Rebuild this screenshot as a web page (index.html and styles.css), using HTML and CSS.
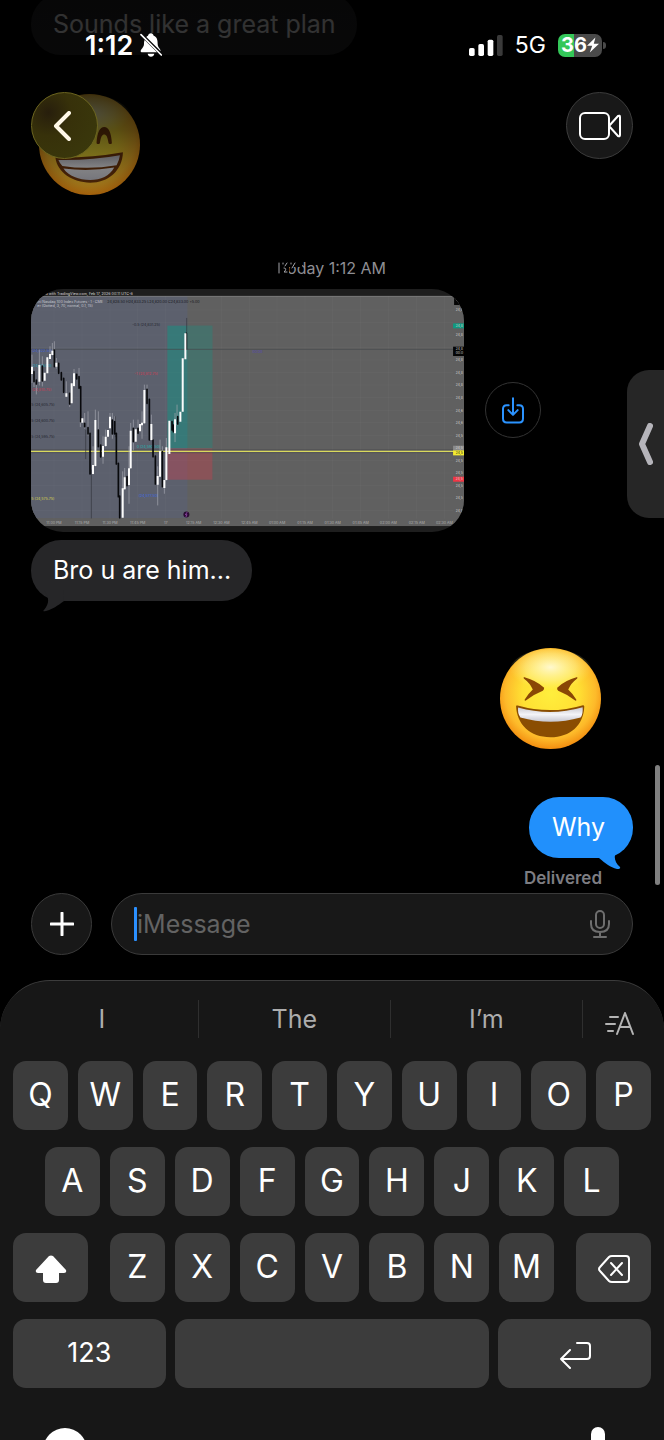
FILE: index.html
```
<!DOCTYPE html>
<html lang="en">
<head>
  <meta charset="UTF-8">
  <meta name="viewport" content="width=device-width, initial-scale=1">
  <title>Messages</title>
  <link rel="stylesheet" href="styles.css">
</head>
<body>
  <header class="top-bar">
    <div class="status-bar">
      <div class="status-left">
        <span class="clock">1:12</span>
        <svg class="bell" viewBox="0 0 66 72" role="img" aria-label="Silent">
          <path d="M33 1c-5 0-8 3-9 7-2 1-4 2-5 4l43 43c0-8-9-11-9-22 0-13-2-21-12-25-1-4-4-7-8-7zM14 21c-2 4-2 8-2 12 0 11-10 15-10 22 0 2 2 3 4 3h45zM23 62c1 5 5 9 10 9s9-4 10-9z" fill="#fff"/>
          <path d="M3 5l61 61" stroke="#fff" stroke-width="5"/>
        </svg>
      </div>
      <div class="status-right">
        <svg class="signal" viewBox="0 0 102 63" aria-hidden="true">
          <rect x="0" y="39" width="17" height="24" rx="5" fill="#fff"/>
          <rect x="28" y="27" width="17" height="36" rx="5" fill="#fff"/>
          <rect x="56" y="14" width="17" height="49" rx="5" fill="#fff"/>
          <rect x="84" y="0" width="17" height="63" rx="5" fill="#3a3a3a"/>
        </svg>
        <span class="network">5G</span>
        <div class="battery">
          <span class="battery-level">36</span>
          <svg class="bolt" viewBox="0 0 30 38" aria-hidden="true">
            <path d="M21 0L0 21h13L7 38l23-22H17z" fill="#fff"/>
          </svg>
        </div>
      </div>
    </div>
    <nav class="nav-row">
      <button class="round-btn back-btn" aria-label="Back">
        <svg viewBox="0 0 18 30"><path d="M16 2L3 15l13 13" stroke="#fff8e8" stroke-width="4"/></svg>
      </button>
      <button class="round-btn video-btn" aria-label="Video call">
        <svg viewBox="0 0 42 28">
          <rect x="1" y="1" width="29" height="26" rx="5" stroke="#fff" stroke-width="2"/>
          <path d="M30 14L39 4q2-1 2 1v18q0 2-2 1z" stroke="#fff" stroke-width="2"/>
        </svg>
      </button>
    </nav>
  </header>

  <main class="thread">
    <div class="bubble received">Sounds like a great plan</div>

    <svg class="emoji first-emoji" viewBox="119 283 302 302" role="img" aria-label="Beaming face">
      <defs>
        <radialGradient id="face" cx="50%" cy="45%" r="56%">
          <stop offset="0" stop-color="#ffee3d"/>
          <stop offset="0.5" stop-color="#ffe033"/>
          <stop offset="0.8" stop-color="#fdba2a"/>
          <stop offset="1" stop-color="#f28a0e"/>
        </radialGradient>
        <radialGradient id="shine" cx="50%" cy="40%" r="50%">
          <stop offset="0" stop-color="#fffbe0" stop-opacity="0.9"/>
          <stop offset="0.6" stop-color="#fff7b0" stop-opacity="0.45"/>
          <stop offset="1" stop-color="#fff27a" stop-opacity="0"/>
        </radialGradient>
        <linearGradient id="teeth" x1="0" y1="0" x2="0" y2="1">
          <stop offset="0" stop-color="#c9c9d2"/>
          <stop offset="0.5" stop-color="#f4f4f8"/>
          <stop offset="1" stop-color="#c5c5cf"/>
        </linearGradient>
      </defs>
      <circle cx="270" cy="434" r="151" fill="url(#face)"/>
      <ellipse cx="270" cy="354" rx="124" ry="68" fill="url(#shine)"/>
      <path d="M202 430c2-30 9-48 22-48s20 18 22 48q-5 5-10 0c-3-20-6-26-12-26s-9 6-12 26q-5 5-10 0zM291 430c2-32 10-48 23-48s21 16 23 48q-5 5-10 0c-3-20-7-26-13-26s-10 6-13 26q-5 5-10 0z" fill="#7a3d0a"/>
      <path d="M168 473q102 2 202-16c-2 56-44 91-98 91-52 0-98-30-104-75z" fill="#74380c"/>
      <path d="M177 480q96 2 184-14-2 16-10 30-84 14-162 2-8-8-12-18zM192 506q76 10 152-3c-14 26-40 37-72 37-34 0-64-11-80-34z" fill="url(#teeth)"/>
    </svg>

    <div class="timestamp">
      <svg class="title-trace" viewBox="0 0 24 17" aria-hidden="true">
        <rect width="24" height="8" fill="#000"/>
        <rect x="2" y="6" width="9" height="11" fill="#000"/>
        <path d="M1 4v10M5 4v1M9 4l-2 3M13 4v1M17 4l-3 5M6 9q3 0 1 3l-1 1h3" fill="none" stroke="#a5a5aa"/>
      </svg>
      Today 1:12 AM
    </div>

    <div class="attachment">
      <svg class="chart" viewBox="33 117 1300 729" role="img" aria-label="Nasdaq futures chart">
        <rect x="33" y="117" width="1300" height="729" fill="#1e1e1e"/>
        <rect x="33" y="138" width="1300" height="690" fill="#606060"/>
        <rect x="33" y="138" width="469" height="666" fill="#5c606d"/>
        <path d="M33 139h1268" stroke="#858585" stroke-width="2"/>
        <path d="M33 180h1265M33 217h1265M33 255h1265M33 292h1265M33 330h1265M33 368h1265M33 405h1265M33 443h1265M33 481h1265M33 518h1265M33 556h1265M33 631h1265M33 669h1265M33 706h1265M33 744h1265M33 781h1265M102 140v665M186 140v665M270 140v665M353 140v665M437 140v665M604 140v665M688 140v665M771 140v665M855 140v665M938 140v665M1022 140v665M1105 140v665M1190 140v665M1273 140v665" stroke="#fff" stroke-opacity="0.045" stroke-width="2" fill="none"/>
        <rect x="442" y="227" width="135" height="368" fill="#00a08a" fill-opacity="0.4"/>
        <rect x="502" y="227" width="75" height="368" fill="#606060" fill-opacity="0.35"/>
        <rect x="442" y="595" width="135" height="94" fill="#e03848" fill-opacity="0.32"/>
        <path d="M33 298h1268" stroke="#45484c" stroke-width="2"/>
        <path d="M33 599h1268M33 608h1268" stroke="#4d4d50" stroke-width="2"/>
        <path d="M33 604h1268" stroke="#d9d95c" stroke-width="4"/>

        <g class="chart-text">
          <text x="70" y="135" fill="#ddd">ed with TradingView.com, Feb 17, 2026 00:11 UTC-6</text>
          <text x="52" y="158" fill="#c8cad2">ini Nasdaq 100 Index Futures · 1 · CME</text>
          <text x="262" y="158" fill="#16171c">24,828.50 H24,833.25 L24,820.00 C24,833.00 +5.00</text>
          <text x="52" y="172" fill="#c8cad2">er (Dotted, 3, 70, normal, 0.1, 15)</text>
          <text x="337" y="228" fill="#23252d">-0.5 (24,831.25)</text>
          <text x="343" y="375" fill="#cc3b52">-1 (24,812.75)</text>
          <text x="36" y="305" fill="#3c5fd6">(24,822.50)</text>
          <text x="36" y="352" fill="#29a8bd">(24,816.00)</text>
          <text x="36" y="422" fill="#cc3b52">(24,810.75)</text>
          <text x="34" y="469" fill="#23252d">5 (24,605.75)</text>
          <text x="34" y="516" fill="#23252d">5 (24,600.75)</text>
          <text x="34" y="563" fill="#23252d">5 (24,595.75)</text>
          <text x="34" y="751" fill="#d6d24e">5 (24,575.75)</text>
          <text x="350" y="594" fill="#22b3ad">0 (24,592.50)</text>
          <text x="356" y="741" fill="#3c6ae0">(24,577.50)</text>
          <text x="697" y="310" fill="#5547b8">00:00</text>
        </g>
        <g class="chart-text chart-axis">
          <text x="102" y="822">11:00 PM</text>
          <text x="186" y="822">11:15 PM</text>
          <text x="270" y="822">11:30 PM</text>
          <text x="353" y="822">11:45 PM</text>
          <text x="437" y="822">17</text>
          <text x="521" y="822">12:15 AM</text>
          <text x="604" y="822">12:30 AM</text>
          <text x="688" y="822">12:45 AM</text>
          <text x="771" y="822">01:00 AM</text>
          <text x="855" y="822">01:15 AM</text>
          <text x="938" y="822">01:30 AM</text>
          <text x="1022" y="822">01:45 AM</text>
          <text x="1105" y="822">02:00 AM</text>
          <text x="1190" y="822">02:15 AM</text>
          <text x="1273" y="822">02:30 AM</text>
        </g>

        <path d="M36 315v83M42 365v45M49 390v42M58 300v105M67 320v88M90 290v35M97 280v35M103 275v75M109 325v30M139 395v45M149 430v40M162 358v52M177 355v60M181 410v120M194 490v45M204 485v70M219 590v82M226 480v168M235 485v105M249 560v80M257 540v50M270 490v45M277 490v75M284 500v50M308 665v60M314 655v63M327 590v170M332 520v135M340 510v90M354 510v40M366 485v80M373 405v115M381 405v55M394 495v75M413 650v115M420 570v110M427 590v120M433 700v30M439 565v125M465 490v85M471 465v60" stroke="#a6a8b0" stroke-width="2" fill="none"/>
        <path d="M214 660v144M197 540v86M286 500v60M500 205v92" stroke="#33353d" stroke-width="2" fill="none"/>
        <path d="M42 365v30M49 390v12M67 348v45M103 300v50M116 340v30M124 368v22M131 385v42M149 430v32M170 373v14M177 380v35M182 410v105M194 520v10M204 533v19M210 550v122M235 540v50M242 585v36M277 510v42M284 515v37M289 550v92M295 640v100M299 738v65M321 680v27M340 535v40M354 535v15M381 418v42M388 448v122M399 570v50M406 618v84M427 605v105M456 515v25M460 525v20M473 500v22M499 250v47" stroke="#08090c" stroke-width="5" fill="none"/>
        <path d="M36 350v22M58 345v50M74 368v24M82 322v48M90 312v15M97 302v13M109 338v12M139 430v10M155 400v60M162 370v38M187 505v13M219 645v27M226 510v138M249 588v32M257 560v28M264 540v20M270 500v35M308 715v88M314 682v36M327 655v50M332 542v113M347 538v37M360 522v22M366 518v8M373 420v100M394 522v48M413 678v26M420 603v77M433 690v24M439 592v98M448 512v100M465 508v42M481 485v30M488 325v160M496 250v78" stroke="#fbfbfb" stroke-width="6" fill="none" stroke-linecap="butt"/>
        <circle cx="499" cy="793" r="9" fill="#2a0b33"/>
        <path d="M501 787l-5 7h5l-3 6" stroke="#b45ad0" stroke-width="2" fill="none"/>

        <g class="chart-text chart-prices">
          <text x="1307" y="184">24,8</text>
          <text x="1307" y="258">24,8</text>
          <text x="1307" y="334">24,8</text>
          <text x="1307" y="372">24,8</text>
          <text x="1307" y="409">24,8</text>
          <text x="1307" y="447">24,8</text>
          <text x="1307" y="485">24,6</text>
          <text x="1307" y="522">24,6</text>
          <text x="1307" y="560">24,5</text>
          <text x="1307" y="635">24,5</text>
          <text x="1307" y="673">24,5</text>
          <text x="1307" y="710">24,5</text>
          <text x="1307" y="748">24,5</text>
          <text x="1307" y="785">24,5</text>
          <rect x="1302" y="139" width="31" height="26" fill="#050505"/>
          <path d="M1310 150l6 6" stroke="#ccc" stroke-width="3"/>
          <rect x="1299" y="220" width="34" height="15" fill="#0f9a80"/>
          <text x="1307" y="231">24,8</text>
          <rect x="1299" y="290" width="34" height="28" fill="#050505"/>
          <text x="1307" y="301">24,8</text>
          <text x="1307" y="313">00:0</text>
          <rect x="1299" y="587" width="34" height="14" fill="#8b8b8b"/>
          <text x="1307" y="598">24,5</text>
          <rect x="1299" y="601" width="34" height="15" fill="#f4ec30"/>
          <text x="1307" y="612" fill="#222">24,5</text>
          <rect x="1299" y="680" width="34" height="15" fill="#f23645"/>
          <text x="1307" y="691">24,5</text>
        </g>
      </svg>
      <button class="save-btn" aria-label="Save photo">
        <svg viewBox="0 0 66 80">
          <path d="M20 24H14Q3 24 3 35V64Q3 76 14 76H52Q63 76 63 64V35Q63 24 52 24H46M33 3V51M19 39L33 53L47 39" stroke="#2b93ff" stroke-width="6"/>
        </svg>
      </button>
    </div>

    <div class="bubble received tail-left">Bro u are him...
      <svg class="tail" viewBox="0 0 22 22"><path d="M1 0C6 8 7 12 1 20q-2 2 2 1C10 19 14 16 21 11L20 0z" fill="#262628"/></svg>
    </div>

    <svg class="emoji sent-emoji" viewBox="60 55 302 302" role="img" aria-label="Laughing face">
      <circle cx="211" cy="206" r="151" fill="url(#face)"/>
      <ellipse cx="211" cy="126" rx="124" ry="68" fill="url(#shine)"/>
      <path d="M131 142Q168 152 192 174Q192 180 188 183Q160 194 136 213Q132 212 134 209Q144 192 158 179Q150 160 131 146zM291 142Q254 152 231 174Q230 180 234 183Q262 194 286 213Q290 212 288 209Q278 192 264 179Q272 160 291 146z" fill="#8a4705"/>
      <path d="M108 228Q109 226 113 227Q211 255 308 226Q312 226 312 230C310 286 270 322 211 322C150 322 110 284 108 228z" fill="#8a4d02"/>
      <path d="M114 233Q211 260 307 232Q309 252 301 263Q211 288 121 263Q112 250 114 233z" fill="url(#teeth)"/>
    </svg>

    <div class="bubble sent">Why
      <svg class="tail" viewBox="0 0 22 22"><path d="M21 0C14 6 14 14 21 20q1 2-3 2C11 20 7 17 0 11L2 0z" fill="#2190fc"/></svg>
    </div>
    <div class="delivered">Delivered</div>
    <div class="scroll-thumb"></div>
  </main>

  <button class="side-tab" aria-label="Open panel">
    <svg viewBox="0 0 14 42"><path d="M11 3L3 21l8 18" stroke="#b5b4ba" stroke-width="6"/></svg>
  </button>

  <form class="composer">
    <button type="button" class="plus-btn" aria-label="Add">
      <svg viewBox="0 0 24 24"><path d="M12 1v22M1 12h22" stroke="#fff" stroke-width="3"/></svg>
    </button>
    <div class="message-field">
      <span class="caret"></span>
      <input type="text" placeholder="iMessage" aria-label="Message">
      <button type="button" class="mic-btn" aria-label="Dictate">
        <svg viewBox="0 0 20 28"><rect x="6" y="1" width="8" height="17" rx="4" stroke="#6e6e6e" stroke-width="2"/><path d="M1 11v3q0 8 9 8t9-8v-3M10 22v5M4 27h12" stroke="#6e6e6e" stroke-width="2"/></svg>
      </button>
    </div>
  </form>

  <section class="keyboard" aria-label="Keyboard">
    <div class="suggestions">
      <button>I</button>
      <button>The</button>
      <button>I’m</button>
      <button class="format-btn" aria-label="Text effects">
        <svg viewBox="0 0 30 24"><path d="M12 22L20 1l8 21M15 15h10M5 5h8M1 12h9M3 19h5" stroke="#b4b4b4" stroke-width="2"/></svg>
      </button>
    </div>
    <div class="key-row">
      <button class="key">Q</button>
      <button class="key">W</button>
      <button class="key">E</button>
      <button class="key">R</button>
      <button class="key">T</button>
      <button class="key">Y</button>
      <button class="key">U</button>
      <button class="key">I</button>
      <button class="key">O</button>
      <button class="key">P</button>
    </div>
    <div class="key-row middle-row">
      <button class="key">A</button>
      <button class="key">S</button>
      <button class="key">D</button>
      <button class="key">F</button>
      <button class="key">G</button>
      <button class="key">H</button>
      <button class="key">J</button>
      <button class="key">K</button>
      <button class="key">L</button>
    </div>
    <div class="key-row shift-row">
      <button class="key" aria-label="Shift">
        <svg class="shift-icon" viewBox="0 0 32 28"><path d="M14 1q2-1 4 0l13 14q1 3-2 3h-5v7q0 3-3 3H11q-3 0-3-3v-7H3q-3 0-2-3z" fill="#fff"/></svg>
      </button>
      <div class="key-row">
        <button class="key">Z</button>
        <button class="key">X</button>
        <button class="key">C</button>
        <button class="key">V</button>
        <button class="key">B</button>
        <button class="key">N</button>
        <button class="key">M</button>
      </div>
      <button class="key" aria-label="Delete">
        <svg class="delete-icon" viewBox="0 0 32 28"><path d="M11 2q1-1 3-1h14q3 0 3 3v20q0 3-3 3H14q-2 0-3-1L2 16q-2-2 0-4zM13 8l11 12M24 8L13 20" stroke="#fff" stroke-width="2"/></svg>
      </button>
    </div>
    <div class="key-row space-row">
      <button class="key key-numbers">123</button>
      <button class="key" aria-label="Space"></button>
      <button class="key" aria-label="Return">
        <svg class="return-icon" viewBox="0 0 32 28"><path d="M18 2h10q3 0 3 3v10q0 3-3 3H2M11 9l-9 9 9 9" stroke="#fff" stroke-width="2"/></svg>
      </button>
    </div>
    <div class="key-footer">
      <button aria-label="Emoji keyboard"><svg class="face-icon" viewBox="0 0 46 46"><circle cx="23" cy="23" r="22" fill="#fff"/></svg></button>
      <button aria-label="Dictation"><svg class="dictate-icon" viewBox="0 0 14 40"><rect width="14" height="30" rx="7" fill="#fff"/></svg></button>
    </div>
  </section>
</body>
</html>
```
FILE: styles.css
```
* {
  box-sizing: border-box;
}

body {
  margin: 0;
  height: 100vh;
  display: flex;
  flex-direction: column;
  position: relative;
  overflow: hidden;
  background: #000;
  color: #fff;
  font-family: Inter, "Liberation Sans", sans-serif;
  font-size: 25px;
}

button {
  display: flex;
  align-items: center;
  justify-content: center;
  margin: 0;
  padding: 0;
  border: none;
  background: none;
  color: inherit;
  font: inherit;
  cursor: pointer;
}

svg {
  display: block;
  fill: none;
  stroke-linecap: round;
  stroke-linejoin: round;
}

/* status bar and nav float over the thread */
.top-bar {
  position: absolute;
  top: 0;
  left: 0;
  right: 0;
  z-index: 2;
  height: 240px;
  padding: 28px 31px 0;
  background: linear-gradient(rgba(0, 0, 0, 0.82) 0, rgba(0, 0, 0, 0.77) 90px, rgba(0, 0, 0, 0.65) 130px, rgba(0, 0, 0, 0.33) 195px, rgba(0, 0, 0, 0) 240px);
}

.status-bar {
  display: flex;
  justify-content: space-between;
  height: 34px;
  padding: 0 31px 0 54px;
}

.status-left,
.status-right {
  display: flex;
  align-items: center;
}

.clock {
  font-size: 27px;
  font-weight: 600;
  margin-right: 7px;
}

.bell {
  width: 22px;
  height: 24px;
}

.signal {
  width: 34px;
  height: 21px;
}

.network {
  margin: 0 12px;
  font-size: 23px;
}

.battery {
  position: relative;
  display: flex;
  align-items: center;
  width: 44px;
  height: 23px;
  padding-left: 3px;
  border-radius: 7px;
  background: linear-gradient(90deg, #34c759 36%, #4a4a4a 36%);
}

.battery::after {
  content: "";
  position: absolute;
  right: -4px;
  top: 8px;
  width: 3px;
  height: 7px;
  border-radius: 0 3px 3px 0;
  background: #4a4a4a;
}

.battery-level {
  font-size: 20px;
  font-weight: 700;
}

.bolt {
  width: 12px;
  height: 16px;
}

.nav-row {
  display: flex;
  justify-content: space-between;
  margin-top: 30px;
}

.round-btn {
  width: 67px;
  height: 67px;
  border: 1px solid #3c3c3c;
  border-radius: 50%;
  background: #181818;
}

.back-btn {
  border-color: #6c651f;
  background: radial-gradient(circle at 25% 30%, #271e0c 0, #37310a 35%, #3b3a0c 100%);
}

.back-btn svg {
  width: 18px;
  height: 30px;
  margin-right: 5px;
}

.video-btn svg {
  width: 42px;
  height: 28px;
}

.thread {
  position: relative;
  flex: 1;
  min-height: 0;
  display: flex;
  flex-direction: column;
  justify-content: flex-end;
  align-items: flex-start;
  padding: 0 31px 3px;
  overflow: hidden;
}

.thread > * {
  flex-shrink: 0;
}

.bubble {
  position: relative;
  padding: 0 21px 0 22px;
  border-radius: 30px;
  line-height: 61px;
}

.received {
  background: #262628;
}

.sent {
  align-self: flex-end;
  padding: 0 28px 0 23px;
  background: #2190fc;
}

.tail {
  position: absolute;
  bottom: -11px;
  width: 22px;
  height: 22px;
}

.tail-left .tail {
  left: 12px;
}

.sent .tail {
  right: 12px;
}

.emoji {
  width: 101px;
  height: 101px;
}

.first-emoji {
  margin: 39px 8px 60px;
}

.sent-emoji {
  align-self: flex-end;
  margin: 47px 32px 48px;
}

.timestamp {
  position: relative;
  align-self: center;
  margin-bottom: 8px;
  color: #8e8e93;
  font-size: 16px;
  line-height: 26px;
}

.title-trace {
  position: absolute;
  left: 0;
  top: 4px;
  width: 24px;
  height: 17px;
}

.attachment {
  display: flex;
  align-items: center;
  gap: 21px;
  width: 100%;
  margin-bottom: 8px;
}

.chart {
  width: 72%;
  height: auto;
  border-radius: 32px;
}

.chart-text {
  font-size: 11px;
}

.chart-axis {
  fill: #b0b0b0;
  text-anchor: middle;
}

.chart-prices {
  fill: #d0d0d0;
  font-size: 10px;
}

.save-btn {
  width: 56px;
  height: 56px;
  border: 1px solid #333;
  border-radius: 50%;
}

.save-btn svg {
  width: 22px;
  height: 27px;
}

.delivered {
  align-self: flex-end;
  margin: 8px 31px 0;
  color: #7d7d82;
  font-size: 17px;
  font-weight: 600;
  line-height: 24px;
}

.scroll-thumb {
  position: absolute;
  right: 4px;
  bottom: 8px;
  width: 5px;
  height: 120px;
  border-radius: 3px;
  background: #808080;
}

.side-tab {
  position: absolute;
  top: 370px;
  right: 0;
  z-index: 1;
  width: 37px;
  height: 148px;
  border-radius: 22px 0 0 22px;
  background: #262626;
}

.side-tab svg {
  width: 14px;
  height: 42px;
}

.composer {
  display: flex;
  gap: 19px;
  margin: 0 0 25px;
  padding: 0 31px;
}

.plus-btn,
.message-field {
  height: 62px;
  border: 1px solid #3a3a3a;
  border-radius: 31px;
  background: #181818;
}

.plus-btn {
  flex: 0 0 61px;
}

.plus-btn svg {
  width: 24px;
  height: 24px;
}

.message-field {
  flex: 1;
  display: flex;
  align-items: center;
  padding: 0 22px;
}

.caret {
  width: 3px;
  height: 34px;
  border-radius: 1px;
  background: #2b90ff;
}

.message-field input {
  flex: 1;
  min-width: 0;
  padding: 0;
  border: none;
  outline: none;
  background: none;
  color: #fff;
  font: inherit;
}

.message-field input::placeholder {
  color: #636363;
  opacity: 1;
}

.mic-btn svg {
  width: 20px;
  height: 28px;
  overflow: visible;
}

.keyboard {
  display: flex;
  flex-direction: column;
  gap: 17px;
  border-top: 1px solid #3c3c3c;
  border-radius: 50px 50px 0 0;
  padding: 19px 13px 0;
  background: #171717;
}

.suggestions {
  display: grid;
  grid-template-columns: 7fr 7fr 7fr 3fr;
  height: 44px;
  margin: 0 -13px 0 -7px;
}

.suggestions button {
  height: 38px;
  color: #adadad;
}

.suggestions button + button {
  border-left: 1px solid #2f2f2f;
}

.format-btn svg {
  width: 30px;
  height: 24px;
  margin: 10px 6px 0 0;
}

.key-row {
  display: grid;
  grid-auto-flow: column;
  grid-auto-columns: 1fr;
  gap: 10px;
}

.middle-row {
  padding: 0 5%;
}

.shift-row {
  grid-template-columns: 75px 1fr 75px;
  gap: 22px;
}

.space-row {
  grid-template-columns: 17fr 35fr 17fr;
  gap: 9px;
}

.key {
  height: 69px;
  padding-bottom: 3px;
  border-radius: 13px;
  background: #3c3c3c;
  font-size: 32px;
}

.key-numbers {
  font-size: 27px;
}

.shift-icon,
.delete-icon,
.return-icon {
  width: 32px;
  height: 28px;
  margin-top: 5px;
}

.key-footer {
  display: flex;
  justify-content: space-between;
  align-items: flex-start;
  height: 13px;
  margin: 22px 46px 0 29px;
  overflow: hidden;
}

.face-icon {
  width: 46px;
  height: 46px;
}

.dictate-icon {
  width: 14px;
  height: 40px;
}
```
